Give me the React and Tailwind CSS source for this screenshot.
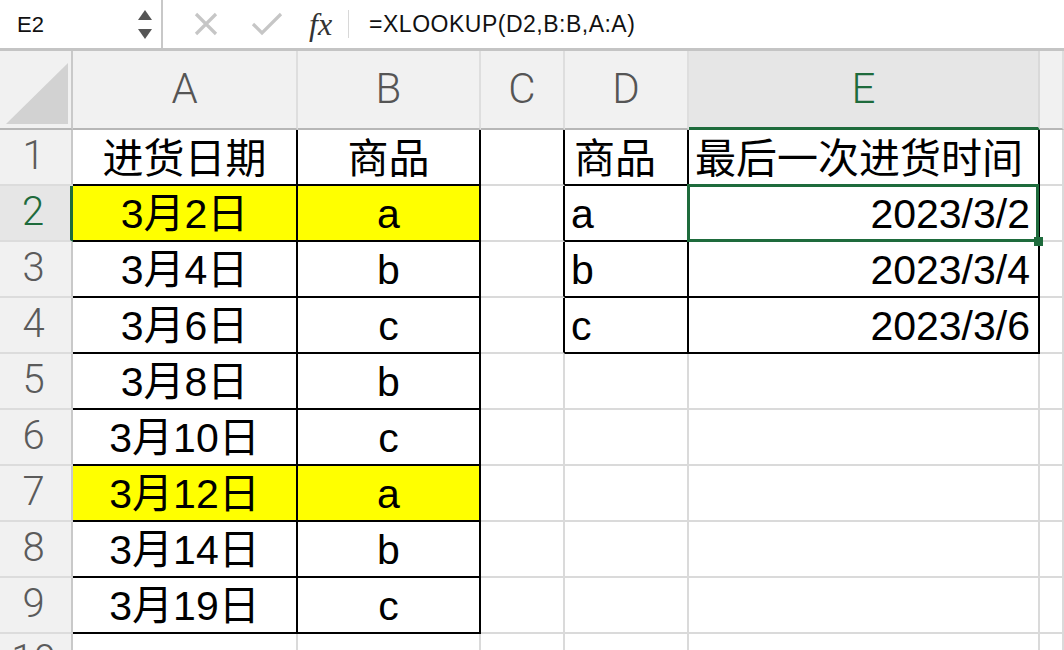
import React from 'react';

const font = "font-['Liberation_Sans','Noto_Sans_CJK_SC',sans-serif]";
const hdrFont = "font-['Roboto','Liberation_Sans',sans-serif]";

const dataA = [
  ['进货日期', '商品', false],
  ['3月2日', 'a', true],
  ['3月4日', 'b', false],
  ['3月6日', 'c', false],
  ['3月8日', 'b', false],
  ['3月10日', 'c', false],
  ['3月12日', 'a', true],
  ['3月14日', 'b', false],
  ['3月19日', 'c', false],
];

const dataD = [
  ['商品', '最后一次进货时间'],
  ['a', '2023/3/2'],
  ['b', '2023/3/4'],
  ['c', '2023/3/6'],
];

const cols = ['A', 'B', 'C', 'D', 'E', ''];

const FormulaBar = () => (
  <div className={`h-[51px] flex items-center bg-white border-b-[3px] border-[#c4c4c4] ${font}`}>
    <div className="w-[163px] h-full flex items-center justify-between pl-[17px] pr-[6px] border-r-2 border-[#c8c8c8]">
      <span className="text-[22px] text-[#111]">E2</span>
      <div className="flex flex-col gap-[9px] items-center mr-[3px]">
        <svg width="14" height="10" viewBox="0 0 14 10"><path d="M7 0 L14 10 L0 10 Z" fill="#555" /></svg>
        <svg width="14" height="10" viewBox="0 0 14 10"><path d="M0 0 L14 0 L7 10 Z" fill="#555" /></svg>
      </div>
    </div>
    <div className="flex items-center h-full">
      <svg className="ml-[31px]" width="24" height="24" viewBox="0 0 24 24">
        <path d="M2 2 L22 22 M22 2 L2 22" stroke="#c6c6c6" strokeWidth="3.2" />
      </svg>
      <svg className="ml-[33px]" width="32" height="26" viewBox="0 0 32 26">
        <path d="M2 13 L11 22 L30 3" stroke="#c6c6c6" strokeWidth="3.2" fill="none" />
      </svg>
      <span className="ml-[26px] font-['Liberation_Serif',serif] italic text-[32px] text-[#333] leading-none">fx</span>
      <div className="ml-[16px] w-px h-[28px] bg-[#d8d8d8]" />
      <span className="ml-[20px] text-[23px] tracking-[0.5px] text-[#111]">=XLOOKUP(D2,B:B,A:A)</span>
    </div>
  </div>
);

const HeaderRow = () => (
  <>
    <div className="h-[79px] bg-[#f1f1f1] border-r-2 border-b-2 border-r-[#c9c9c9] border-b-[#b7b7b7] relative">
      <svg className="absolute left-[6px] top-[12px]" width="62" height="61" viewBox="0 0 62 61">
        <path d="M62 0 L62 61 L0 61 Z" fill="#d2d2d2" />
      </svg>
    </div>
    {cols.map((c, i) => (
      <div key={i}
        className={`h-[79px] flex items-center justify-center border-r-2 text-[42px] font-light ${hdrFont} ${
          c === 'E'
            ? 'bg-[#e6e6e6] border-b-[3px] border-b-[#1e6b3c] border-r-[#d9d9d9] text-[#1e6b3c]'
            : 'bg-[#f1f1f1] border-b-2 border-b-[#b7b7b7] border-r-[#dedede] text-[#555]'
        }`}>
        <span className="pb-[2px]">{c}</span>
      </div>
    ))}
  </>
);

const Cell = ({ children, className = '' }) => (
  <div className={`h-[56px] border-r-2 border-b-2 flex text-[41px] leading-none text-black ${className}`}>
    {children}
  </div>
);

const App = () => {
  const rows = [];
  for (let r = 1; r <= 10; r++) {
    const a = dataA[r - 1];
    const d = dataD[r - 1];
    const sel = r === 2;
    const inA = !!a;
    const inD = !!d;
    rows.push(
      <React.Fragment key={r}>
        <div className={`h-[56px] flex items-center justify-center text-[40px] font-light ${hdrFont} border-b-2 border-b-[#dcdcdc] ${
          sel ? 'bg-[#e6e6e6] text-[#1e6b3c] border-r-[3px] border-r-[#1e6b3c]' : 'bg-[#f1f1f1] text-[#5b5b5b] border-r-2 border-r-[#c9c9c9]'
        }`}>
          <span className="pb-[2px] pr-[4px]">{r}</span>
        </div>
        <Cell className={`items-center justify-center ${inA ? 'border-black' : 'border-[#dadada]'} ${a && a[2] ? 'bg-[#ffff00]' : 'bg-white'}`}>
          {a && <span className={r === 1 ? 'pt-[5px]' : 'pt-[2px]'}>{a[0]}</span>}
        </Cell>
        <Cell className={`items-center justify-center ${inA ? 'border-black' : 'border-[#dadada]'} ${a && a[2] ? 'bg-[#ffff00]' : 'bg-white'}`}>
          {a && <span className={r === 1 ? 'pt-[5px]' : 'pt-[2px]'}>{a[1]}</span>}
        </Cell>
        <Cell className={`bg-white border-b-[#dadada] ${inD ? 'border-r-black' : 'border-r-[#dadada]'}`} />
        <Cell className={`items-center bg-white ${inD ? 'border-black' : 'border-[#dadada]'} ${r === 1 ? 'pl-[9px]' : 'pl-[6px]'}`}>
          {d && <span className={r === 1 ? 'pt-[5px]' : 'pt-[2px]'}>{d[0]}</span>}
        </Cell>
        <Cell className={`items-center bg-white relative ${sel ? 'z-10' : ''} ${inD ? 'border-black' : 'border-[#dadada]'} ${r === 1 ? 'pl-[6px]' : 'justify-end pr-[8px]'}`}>
          {d && <span className={r === 1 ? 'pt-[5px]' : 'pt-[2px]'}>{d[1]}</span>}
          {sel && (
            <>
              <div className="absolute -left-[2px] -top-[2px] -right-[1px] -bottom-[2px] border-[3px] border-[#1e6b3c] pointer-events-none" />
              <div className="absolute -right-[5px] -bottom-[6px] w-[9px] h-[9px] bg-[#1e6b3c]" />
            </>
          )}
        </Cell>
        <Cell className="bg-white border-[#dadada]" />
      </React.Fragment>
    );
  }

  return (
    <div className={`w-[1064px] h-[650px] overflow-hidden bg-white ${font}`}>
      <FormulaBar />
      <div className="grid grid-cols-[73px_225px_183px_84px_124px_351px_1fr]">
        <HeaderRow />
        {rows}
      </div>
    </div>
  );
};

export default App;
